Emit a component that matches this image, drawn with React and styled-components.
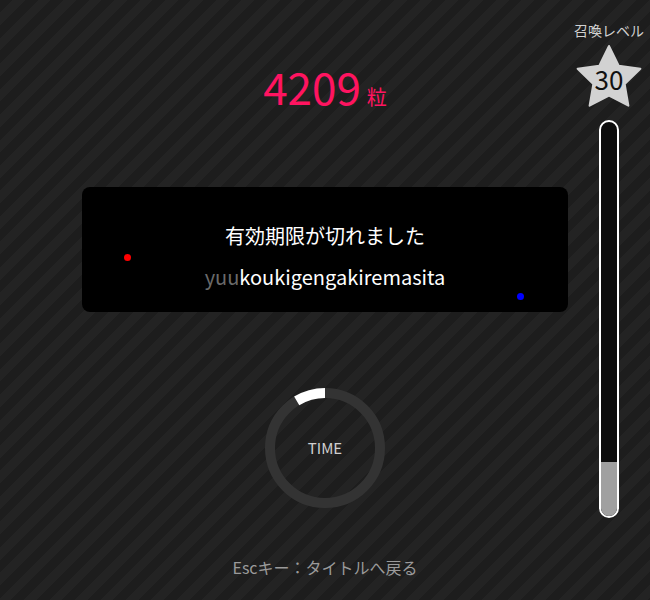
import React from 'react';
import styled, { createGlobalStyle } from 'styled-components';

const GlobalStyle = createGlobalStyle`
  html, body { margin: 0; padding: 0; }
  body {
    font-family: "Noto Sans CJK JP", "Noto Sans", sans-serif;
    background: #1f1f1f;
  }
`;

const Screen = styled.div`
  width: 650px;
  height: 600px;
  overflow: hidden;
  display: grid;
  grid-template-columns: 1fr 486px 1fr;
  background: repeating-linear-gradient(135deg, #1d1d1d 0 9px, #232323 9px 18px);
`;

const MainColumn = styled.main`
  grid-column: 2;
  display: flex;
  flex-direction: column;
  align-items: center;
  padding-top: 64px;
`;

const Score = styled.div`
  display: flex;
  align-items: baseline;
  color: #ff1460;
  line-height: 1;
  height: 44px;
`;

const ScoreValue = styled.span`
  font-size: 44px;
`;

const ScoreUnit = styled.span`
  font-size: 20px;
  margin-left: 6px;
`;

const Card = styled.section`
  position: relative;
  margin-top: 79px;
  width: 100%;
  height: 125px;
  box-sizing: border-box;
  background: #000;
  border-radius: 8px;
  display: flex;
  flex-direction: column;
  align-items: center;
  justify-content: center;
  gap: 15px;
  padding-top: 14px;
`;

const Question = styled.div`
  color: #fff;
  font-size: 20px;
  line-height: 26px;
`;

const Romaji = styled.div`
  font-size: 20px;
  line-height: 26px;
  color: #fff;
`;

const Typed = styled.span`
  color: #6a6a6a;
`;

const Particle = styled.span`
  position: absolute;
  width: 7px;
  height: 7px;
  border-radius: 50%;
  background: ${p => p.$color};
  left: ${p => p.$x}px;
  top: ${p => p.$y}px;
`;

const Timer = styled.div`
  position: relative;
  margin-top: 76px;
  width: 120px;
  height: 120px;
  display: flex;
  align-items: center;
  justify-content: center;
`;

const TimerRing = styled.svg`
  position: absolute;
  inset: 0;
`;

const TimerLabel = styled.span`
  position: relative;
  color: #cfcfcf;
  font-size: 15px;
  margin-top: -2px;
`;

const Footer = styled.div`
  margin-top: 47px;
  color: #9a9a9a;
  font-size: 16px;
  line-height: 24px;
`;

const SidePanel = styled.aside`
  grid-column: 3;
  display: flex;
  flex-direction: column;
  align-items: center;
  padding-top: 22px;
`;

const LevelLabel = styled.div`
  color: #d0d0d0;
  font-size: 14px;
  line-height: 16px;
  white-space: nowrap;
`;

const Star = styled.div`
  position: relative;
  margin-top: 5px;
  width: 68px;
  height: 66px;
  display: flex;
  align-items: center;
  justify-content: center;
`;

const StarShape = styled.svg`
  position: absolute;
  inset: 0;
`;

const LevelValue = styled.span`
  position: relative;
  color: #111;
  font-size: 26px;
  line-height: 1;
  margin-top: 6px;
`;

const Gauge = styled.div`
  margin-top: 11px;
  width: 20px;
  height: 398px;
  box-sizing: border-box;
  border: 2px solid #fff;
  border-radius: 10px;
  background: #0c0c0c;
  overflow: hidden;
  display: flex;
  flex-direction: column;
  justify-content: flex-end;
`;

const GaugeFill = styled.div`
  width: 100%;
  background: #a0a0a0;
`;

function starPoints(cx, cy, R, r) {
  const pts = [];
  for (let i = 0; i < 10; i++) {
    const rad = i % 2 === 0 ? R : r;
    const a = (Math.PI / 5) * i - Math.PI / 2;
    pts.push(`${(cx + rad * Math.cos(a)).toFixed(2)},${(cy + rad * Math.sin(a)).toFixed(2)}`);
  }
  return pts.join(' ');
}

export default function App() {
  const gauge = 0.137;
  return (
    <>
      <GlobalStyle />
      <Screen>
        <MainColumn>
          <Score>
            <ScoreValue>4209</ScoreValue>
            <ScoreUnit>粒</ScoreUnit>
          </Score>
          <Card>
            <Question>有効期限が切れました</Question>
            <Romaji><Typed>yuu</Typed>koukigengakiremasita</Romaji>
            <Particle $color="#ff0000" $x={42} $y={67} />
            <Particle $color="#0000ff" $x={435} $y={106} />
          </Card>
          <Timer>
            <TimerRing width="120" height="120" viewBox="0 0 120 120">
              <circle cx="60" cy="60" r="55" fill="none" stroke="#333333" strokeWidth="10" />
              <path d="M60 5 A55 55 0 0 0 31.7 12.9" fill="none" stroke="#ffffff" strokeWidth="10" />
            </TimerRing>
            <TimerLabel>TIME</TimerLabel>
          </Timer>
          <Footer>Escキー：タイトルへ戻る</Footer>
        </MainColumn>
        <SidePanel>
          <LevelLabel>召喚レベル</LevelLabel>
          <Star>
            <StarShape width="68" height="66" viewBox="0 0 68 66">
              <polygon
                points={starPoints(34, 36, 33, 16.5)}
                fill="#d2d2d2"
                stroke="#d2d2d2"
                strokeWidth="2"
                strokeLinejoin="round"
              />
            </StarShape>
            <LevelValue>30</LevelValue>
          </Star>
          <Gauge>
            <GaugeFill style={{ height: `${gauge * 100}%` }} />
          </Gauge>
        </SidePanel>
      </Screen>
    </>
  );
}
